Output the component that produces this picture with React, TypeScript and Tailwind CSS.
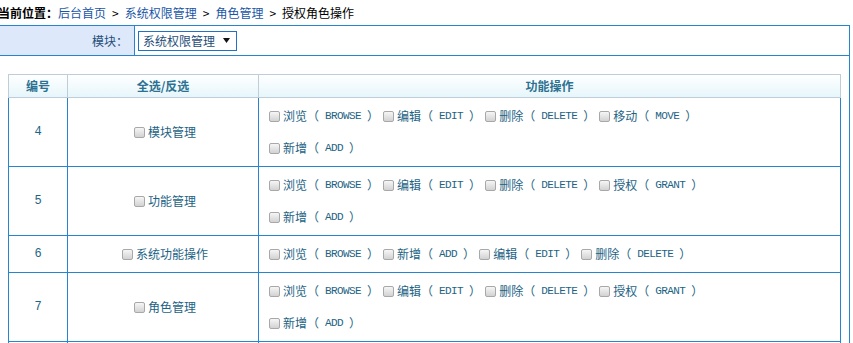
type Op = [string, string]

const rows: { id: number; name: string; lines: Op[][] }[] = [
  {
    id: 4,
    name: "模块管理",
    lines: [
      [["浏览", "BROWSE"], ["编辑", "EDIT"], ["删除", "DELETE"], ["移动", "MOVE"]],
      [["新增", "ADD"]],
    ],
  },
  {
    id: 5,
    name: "功能管理",
    lines: [
      [["浏览", "BROWSE"], ["编辑", "EDIT"], ["删除", "DELETE"], ["授权", "GRANT"]],
      [["新增", "ADD"]],
    ],
  },
  {
    id: 6,
    name: "系统功能操作",
    lines: [[["浏览", "BROWSE"], ["新增", "ADD"], ["编辑", "EDIT"], ["删除", "DELETE"]]],
  },
  {
    id: 7,
    name: "角色管理",
    lines: [
      [["浏览", "BROWSE"], ["编辑", "EDIT"], ["删除", "DELETE"], ["授权", "GRANT"]],
      [["新增", "ADD"]],
    ],
  },
  {
    id: 8,
    name: "用户管理",
    lines: [
      [["浏览", "BROWSE"], ["编辑", "EDIT"], ["删除", "DELETE"], ["授权", "GRANT"]],
      [["新增", "ADD"]],
    ],
  },
]

function Box() {
  return (
    <span className="ml-[4px] mr-[3px] inline-block h-[11px] w-[11px] shrink-0 rounded-[2px] border border-[#a8a8a8] bg-linear-to-b from-[#f6f6f6] to-[#d2d2d2]" />
  )
}

function Item({ op }: { op: Op }) {
  return (
    <span className="flex items-center">
      <Box />
      <span>{op[0]}</span>
      <span>（</span>
      <span className="whitespace-pre font-['Liberation_Mono',monospace] text-[11px] tracking-[-0.6px]">{` ${op[1]} `}</span>
      <span>）</span>
    </span>
  )
}

export default function App() {
  return (
    <div className="-ml-[2px] w-[855px] bg-white font-['Noto_Sans_CJK_SC',sans-serif] text-[12px] leading-none">
      <div className="flex h-[25px] items-center text-black">
        <span className="font-bold">当前位置：</span>
        <span className="text-[#1a56a6]">后台首页</span>
        <span className="px-[6px]">&gt;</span>
        <span className="text-[#1a56a6]">系统权限管理</span>
        <span className="px-[6px]">&gt;</span>
        <span className="text-[#1a56a6]">角色管理</span>
        <span className="px-[6px]">&gt;</span>
        <span>授权角色操作</span>
      </div>

      <div className="w-[852px] border-x border-t border-[#2784cf]">
        <div className="flex h-[30px] border-b border-[#2784cf]">
          <div className="flex w-[136px] items-center justify-end border-r border-[#2784cf] bg-[#dde9fb] pr-[6px] text-[#1f4e79]">
            模块：
          </div>
          <div className="flex items-center">
            <div className="ml-[3px] flex h-[20px] w-[99px] items-center justify-between border border-[#2272c3] pl-[4px] pr-[6px] text-[#1f4e79]">
              <span>系统权限管理</span>
              <svg width="7" height="5" viewBox="0 0 7 5">
                <path d="M0 0h7L3.5 5z" fill="#111" />
              </svg>
            </div>
          </div>
        </div>

        <div className="pb-[20px] pl-[9px] pr-[8px] pt-[18px]">
          <div className="flex h-[24px] border-y border-[#c0cdd8] bg-linear-to-b from-white to-[#e6f6fb] font-bold text-[#2c7191]">
            <div className="flex w-[60px] items-center justify-center border-x border-[#c0cdd8]">编号</div>
            <div className="flex w-[191px] items-center justify-center border-r border-[#c0cdd8]">全选/反选</div>
            <div className="flex w-[582px] items-center justify-center border-r border-[#c0cdd8]">功能操作</div>
          </div>

          {rows.map((row) => (
            <div key={row.id} className="flex border-b border-[#2784cf] text-[#1d6384]">
              <div className="flex w-[60px] items-center justify-center border-x border-[#2784cf] font-['Liberation_Mono',monospace] text-[12px]">
                {row.id}
              </div>
              <div className="flex w-[191px] items-center justify-center border-r border-[#2784cf]">
                <Box />
                <span>{row.name}</span>
              </div>
              <div className="flex w-[582px] flex-col border-r border-[#2784cf] py-[2px] pl-[6px]">
                {row.lines.map((line, i) => (
                  <div key={i} className="flex h-[32px] items-center">
                    {line.map((op) => (
                      <Item key={op[1]} op={op} />
                    ))}
                  </div>
                ))}
              </div>
            </div>
          ))}
        </div>
      </div>
    </div>
  )
}
